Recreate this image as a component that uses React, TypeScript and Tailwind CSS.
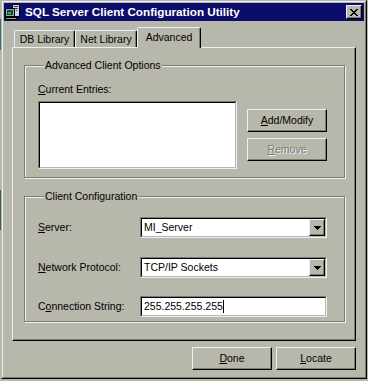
import React from "react";

function RaisedButton({ children, disabled }: { children: React.ReactNode; disabled?: boolean }) {
  return (
    <div
      className={
        "w-[80px] h-[23px] flex items-center justify-center bg-[#b8b7ac] border border-t-[#eeeefa] border-l-[#eeeefa] border-r-black border-b-black shadow-[inset_-1px_-1px_0_#7c7c74] " +
        (disabled ? "text-[#7c7c74] [text-shadow:1px_1px_0_#eeeefa]" : "text-black")
      }
    >
      <span>{children}</span>
    </div>
  );
}

function Sunken({ children, className }: { children: React.ReactNode; className?: string }) {
  return (
    <div className={"border border-t-[#7c7c74] border-l-[#7c7c74] border-r-[#eeeefa] border-b-[#eeeefa] " + (className || "")}>
      <div className="h-full w-full border border-t-black border-l-black border-r-[#b8b7ac] border-b-[#b8b7ac] bg-white flex items-center">
        {children}
      </div>
    </div>
  );
}

function DropArrow() {
  return (
    <div className="w-[16px] h-full shrink-0 flex items-center justify-center bg-[#b8b7ac] border border-t-[#eeeefa] border-l-[#eeeefa] border-r-black border-b-black shadow-[inset_-1px_-1px_0_#7c7c74]">
      <svg width="7" height="4" viewBox="0 0 7 4" shapeRendering="crispEdges">
        <rect x="0" y="0" width="7" height="1" fill="#000" />
        <rect x="1" y="1" width="5" height="1" fill="#000" />
        <rect x="2" y="2" width="3" height="1" fill="#000" />
        <rect x="3" y="3" width="1" height="1" fill="#000" />
      </svg>
    </div>
  );
}

function Combo({ value }: { value: string }) {
  return (
    <Sunken className="w-[187px] h-[21px]">
      <span className="flex-1 pl-[2px] whitespace-nowrap">{value}</span>
      <DropArrow />
    </Sunken>
  );
}

function TitleIcon() {
  return (
    <svg width="16" height="16" viewBox="0 0 16 16" shapeRendering="crispEdges">
      <rect x="7" y="0" width="8" height="13" fill="#000" />
      <rect x="8" y="1" width="6" height="11" fill="#d0d0f0" />
      <rect x="9" y="2" width="4" height="1" fill="#30308a" />
      <rect x="9" y="4" width="4" height="1" fill="#30308a" />
      <rect x="9" y="6" width="1" height="1" fill="#30308a" />
      <rect x="11" y="6" width="1" height="1" fill="#30308a" />
      <rect x="0" y="4" width="10" height="9" fill="#000" />
      <rect x="1" y="5" width="8" height="7" fill="#a8a8a0" />
      <rect x="2" y="6" width="6" height="5" fill="#0f4a4a" />
      <rect x="3" y="8" width="3" height="2" fill="#26c426" />
      <rect x="0" y="13" width="12" height="3" fill="#000" />
      <rect x="1" y="14" width="10" height="1" fill="#a8a8a0" />
      <rect x="2" y="14" width="2" height="1" fill="#26c426" />
    </svg>
  );
}

function CloseGlyph() {
  const rows = ["11000011", "01100110", "00111100", "00011000", "00111100", "01100110", "11000011"];
  return (
    <svg width="8" height="7" viewBox="0 0 8 7" shapeRendering="crispEdges">
      {rows.map((r, y) =>
        r.split("").map((c, x) => (c === "1" ? <rect key={`${x}-${y}`} x={x} y={y} width="1" height="1" fill="#000" /> : null))
      )}
    </svg>
  );
}

export default function App() {
  return (
    <div className="w-[368px] h-[381px] bg-[#b8b7ac] flex font-['Liberation_Sans',Arial,sans-serif] text-[10.5px] leading-[13px] text-black overflow-hidden">
      <div className="w-[1px] shrink-0 flex flex-col">
        <div className="h-[19px]" />
        <div className="h-[31px] bg-[#2b7472]" />
        <div className="h-[140px]" />
        <div className="h-[40px] bg-[#3a5d5c]" />
      </div>
      <div className="w-[366px] h-[379px] shrink-0 border border-t-[#b8b7ac] border-l-[#b8b7ac] border-r-black border-b-black">
        <div className="h-full border border-t-[#eeeefa] border-l-[#eeeefa] border-r-[#7c7c74] border-b-[#7c7c74] p-[1px] flex flex-col">
          {/* Title bar */}
          <div className="h-[18px] bg-[#0c0c6a] flex items-center pl-[1px] pr-[2px]">
            <TitleIcon />
            <span className="ml-[4px] text-white font-bold text-[11.7px] leading-[18px] whitespace-nowrap">
              SQL Server Client Configuration Utility
            </span>
            <div className="ml-auto w-[16px] h-[14px] bg-[#b8b7ac] flex items-center justify-center border border-t-[#eeeefa] border-l-[#eeeefa] border-r-black border-b-black shadow-[inset_-1px_-1px_0_#7c7c74]">
              <CloseGlyph />
            </div>
          </div>

          {/* Tabs */}
          <div className="mt-[6px] h-[20px] flex items-end pl-[10px]">
            <div className="w-[61px] h-[17px] flex items-center justify-center rounded-t-[2px] border-t border-l border-r border-t-[#eeeefa] border-l-[#eeeefa] border-r-black shadow-[inset_-1px_0_0_#7c7c74]">
              DB Library
            </div>
            <div className="w-[62px] h-[17px] flex items-center justify-center rounded-t-[2px] border-t border-l border-r border-t-[#eeeefa] border-l-[#eeeefa] border-r-black shadow-[inset_-1px_0_0_#7c7c74]">
              Net Library
            </div>
            <div className="relative z-10 w-[64px] h-[21px] -mb-[1px] bg-[#b8b7ac] flex items-center justify-center pb-[1px] rounded-t-[2px] border-t border-l border-r border-t-[#eeeefa] border-l-[#eeeefa] border-r-black shadow-[inset_-1px_0_0_#7c7c74]">
              Advanced
            </div>
          </div>

          {/* Panel */}
          <div className="mx-[8px] h-[294px] border border-t-[#eeeefa] border-l-[#eeeefa] border-r-black border-b-black shadow-[inset_-1px_-1px_0_#7c7c74] pl-[11px] flex flex-col">
            <fieldset className="mt-[11px] w-[321px] border border-[#7c7c74] shadow-[inset_1px_1px_0_#eeeefa,1px_1px_0_#eeeefa] pl-[13px] pb-[8px]">
              <legend className="ml-[6px] px-[1px] bg-[#b8b7ac] leading-[13px]">Advanced Client Options</legend>
              <div className="mt-[11px]">
                <u>C</u>urrent Entries:
              </div>
              <div className="mt-[5px] flex">
                <Sunken className="w-[199px] h-[68px]">
                  <span />
                </Sunken>
                <div className="ml-[10px] pt-[8px] flex flex-col gap-[6px]">
                  <RaisedButton>
                    <u>A</u>dd/Modify
                  </RaisedButton>
                  <RaisedButton disabled>
                    <u>R</u>emove
                  </RaisedButton>
                </div>
              </div>
            </fieldset>

            <fieldset className="mt-[12px] w-[321px] border border-[#7c7c74] shadow-[inset_1px_1px_0_#eeeefa,1px_1px_0_#eeeefa] pl-[13px] pb-[4px]">
              <legend className="ml-[6px] px-[1px] bg-[#b8b7ac] leading-[13px]">Client Configuration</legend>
              <div className="mt-[14px] flex items-center h-[21px]">
                <div className="w-[102px]">
                  <u>S</u>erver:
                </div>
                <Combo value="MI_Server" />
              </div>
              <div className="mt-[19px] flex items-center h-[21px]">
                <div className="w-[102px]">
                  <u>N</u>etwork Protocol:
                </div>
                <Combo value="TCP/IP Sockets" />
              </div>
              <div className="mt-[18px] flex items-center h-[21px]">
                <div className="w-[102px]">
                  C<u>o</u>nnection String:
                </div>
                <Sunken className="w-[187px] h-[21px]">
                  <span className="pl-[2px] whitespace-nowrap">255.255.255.255</span>
                  <span className="w-[1px] h-[13px] bg-black" />
                </Sunken>
              </div>
            </fieldset>
          </div>

          {/* Bottom buttons */}
          <div className="mt-[6px] flex justify-end gap-[4px] pr-[8px]">
            <RaisedButton>
              <u>D</u>one
            </RaisedButton>
            <RaisedButton>
              <u>L</u>ocate
            </RaisedButton>
          </div>
        </div>
      </div>
    </div>
  );
}
